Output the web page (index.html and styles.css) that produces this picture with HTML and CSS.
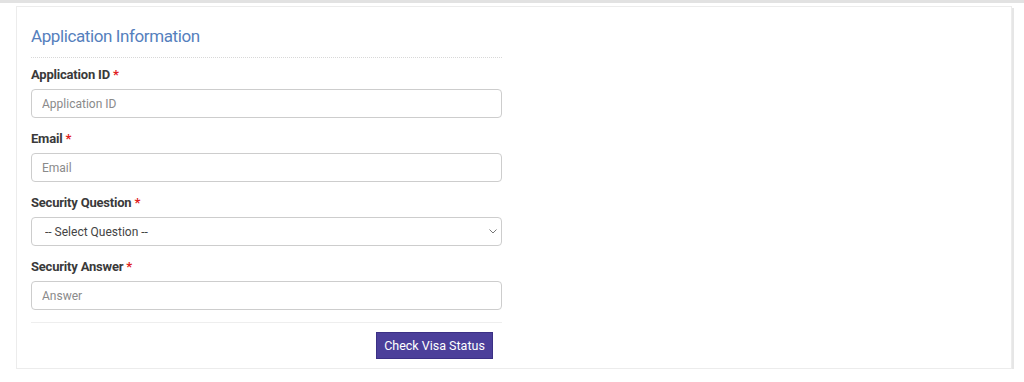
FILE: index.html
```html
<!DOCTYPE html>
<html lang="en">
<head>
  <meta charset="UTF-8">
  <meta name="viewport" content="width=device-width, initial-scale=1.0">
  <title>Visa Status</title>
  <link rel="stylesheet" href="styles.css">
</head>
<body>
  <div class="topbar"></div>

  <div class="card">
    <form class="status-form" onsubmit="return false;">
      <h2 class="form-title">Application Information</h2>

      <div class="field">
        <label for="appId">Application ID <span class="req">*</span></label>
        <input type="text" id="appId" placeholder="Application ID">
      </div>

      <div class="field">
        <label for="email">Email <span class="req">*</span></label>
        <input type="text" id="email" placeholder="Email">
      </div>

      <div class="field">
        <label for="question">Security Question <span class="req">*</span></label>
        <div class="select-wrap">
          <select id="question">
            <option>-- Select Question --</option>
          </select>
          <svg class="chevron" width="8" height="5" viewBox="0 0 8 5">
            <path d="M0.5 0.5 L4 4 L7.5 0.5" fill="none" stroke="#777" stroke-width="1"/>
          </svg>
        </div>
      </div>

      <div class="field">
        <label for="answer">Security Answer <span class="req">*</span></label>
        <input type="text" id="answer" placeholder="Answer">
      </div>

      <div class="actions">
        <button class="btn" type="submit">Check Visa Status</button>
      </div>
    </form>
  </div>
</body>
</html>
```

FILE: styles.css
```css
body {
  margin: 0;
  font-family: Roboto, "Liberation Sans", Arial, sans-serif;
  background: #fff;
  color: #333;
}
.topbar {
  height: 3px;
  background: #e2e2e2;
  margin-bottom: 3px;
}
.card {
  margin-left: 16px;
  width: 966px;
  padding: 17px 14px 9px 14px;
  border: 1px solid #ececec;
  box-shadow: 2px 2px 0 #e6e6e6;
}
.status-form {
  width: 471px;
}
.form-title {
  margin: 0;
  font-size: 17px;
  font-weight: 400;
  letter-spacing: -0.4px;
  line-height: 24px;
  color: #5580bd;
  padding-bottom: 9px;
  border-bottom: 1px dotted #d8d8d8;
  margin-bottom: 8px;
}
.field {
  margin-bottom: 12px;
}
.field label {
  display: block;
  font-size: 13px;
  font-weight: bold;
  letter-spacing: -0.2px;
  line-height: 18px;
  color: #3a3a3a;
  margin-bottom: 5px;
}
.req {
  color: #e02020;
}
.field input, .field select {
  display: block;
  box-sizing: border-box;
  width: 100%;
  height: 29px;
  padding: 0 10px;
  font-family: inherit;
  font-size: 12px;
  color: #555;
  border: 1px solid #cdcdcd;
  border-radius: 4px;
  background: #fff;
}
.select-wrap {
  position: relative;
}
.field select {
  appearance: none;
  -webkit-appearance: none;
  padding-left: 13px;
  color: #444;
}
.chevron {
  position: absolute;
  right: 5px;
  top: 12px;
  pointer-events: none;
}
.field input::placeholder {
  color: #8a8a8a;
}
.actions {
  border-top: 1px solid #eee;
  padding-top: 9px;
  text-align: right;
  padding-right: 9px;
}
.btn {
  background: #4b3f9a;
  color: #fff;
  border: 1px solid #3b3085;
  font-family: inherit;
  font-size: 12.5px;
  width: 117px;
  height: 27px;
  padding: 0;
  cursor: pointer;
}
```
